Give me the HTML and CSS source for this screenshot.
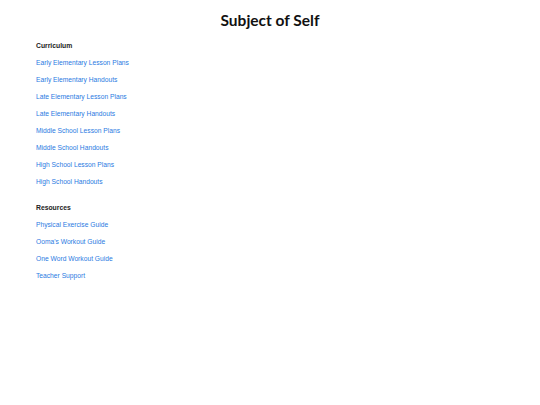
FILE: index.html
```html
<!DOCTYPE html>
<html>
<head>
<meta charset="utf-8">
<link rel="stylesheet" href="styles.css">
</head>
<body>
<div class="page">
  <h1 class="title">Subject of Self</h1>
  <section class="group">
    <h2 class="group-title">Curriculum</h2>
    <ul class="links">
      <li><a href="#">Early Elementary Lesson Plans</a></li>
      <li><a href="#">Early Elementary Handouts</a></li>
      <li><a href="#">Late Elementary Lesson Plans</a></li>
      <li><a href="#">Late Elementary Handouts</a></li>
      <li><a href="#">Middle School Lesson Plans</a></li>
      <li><a href="#">Middle School Handouts</a></li>
      <li><a href="#">High School Lesson Plans</a></li>
      <li><a href="#">High School Handouts</a></li>
    </ul>
  </section>
  <section class="group">
    <h2 class="group-title">Resources</h2>
    <ul class="links">
      <li><a href="#">Physical Exercise Guide</a></li>
      <li><a href="#">Ooma's Workout Guide</a></li>
      <li><a href="#">One Word Workout Guide</a></li>
      <li><a href="#">Teacher Support</a></li>
    </ul>
  </section>
</div>
</body>
</html>
```
FILE: styles.css
```css
html, body {
  margin: 0;
  padding: 0;
  background: #ffffff;
}
.page {
  padding: 10px 36px 0;
  font-family: "Liberation Sans", Arial, sans-serif;
}
.title {
  margin: 0;
  text-align: center;
  font-family: "Lato", "Inter", sans-serif;
  font-weight: 700;
  font-size: 15.5px;
  line-height: 20px;
  color: #111111;
}
.group {
  margin-top: 11px;
}
.group + .group {
  margin-top: 17px;
}
.group-title {
  margin: 0;
  font-size: 6.8px;
  line-height: 9px;
  font-weight: 700;
  color: #222222;
}
.links {
  list-style: none;
  margin: 0;
  padding: 0;
}
.links li {
  margin-top: 8px;
  line-height: 9px;
  font-size: 6.7px;
}
.links a {
  color: #2a7ae2;
  text-decoration: none;
}
```
